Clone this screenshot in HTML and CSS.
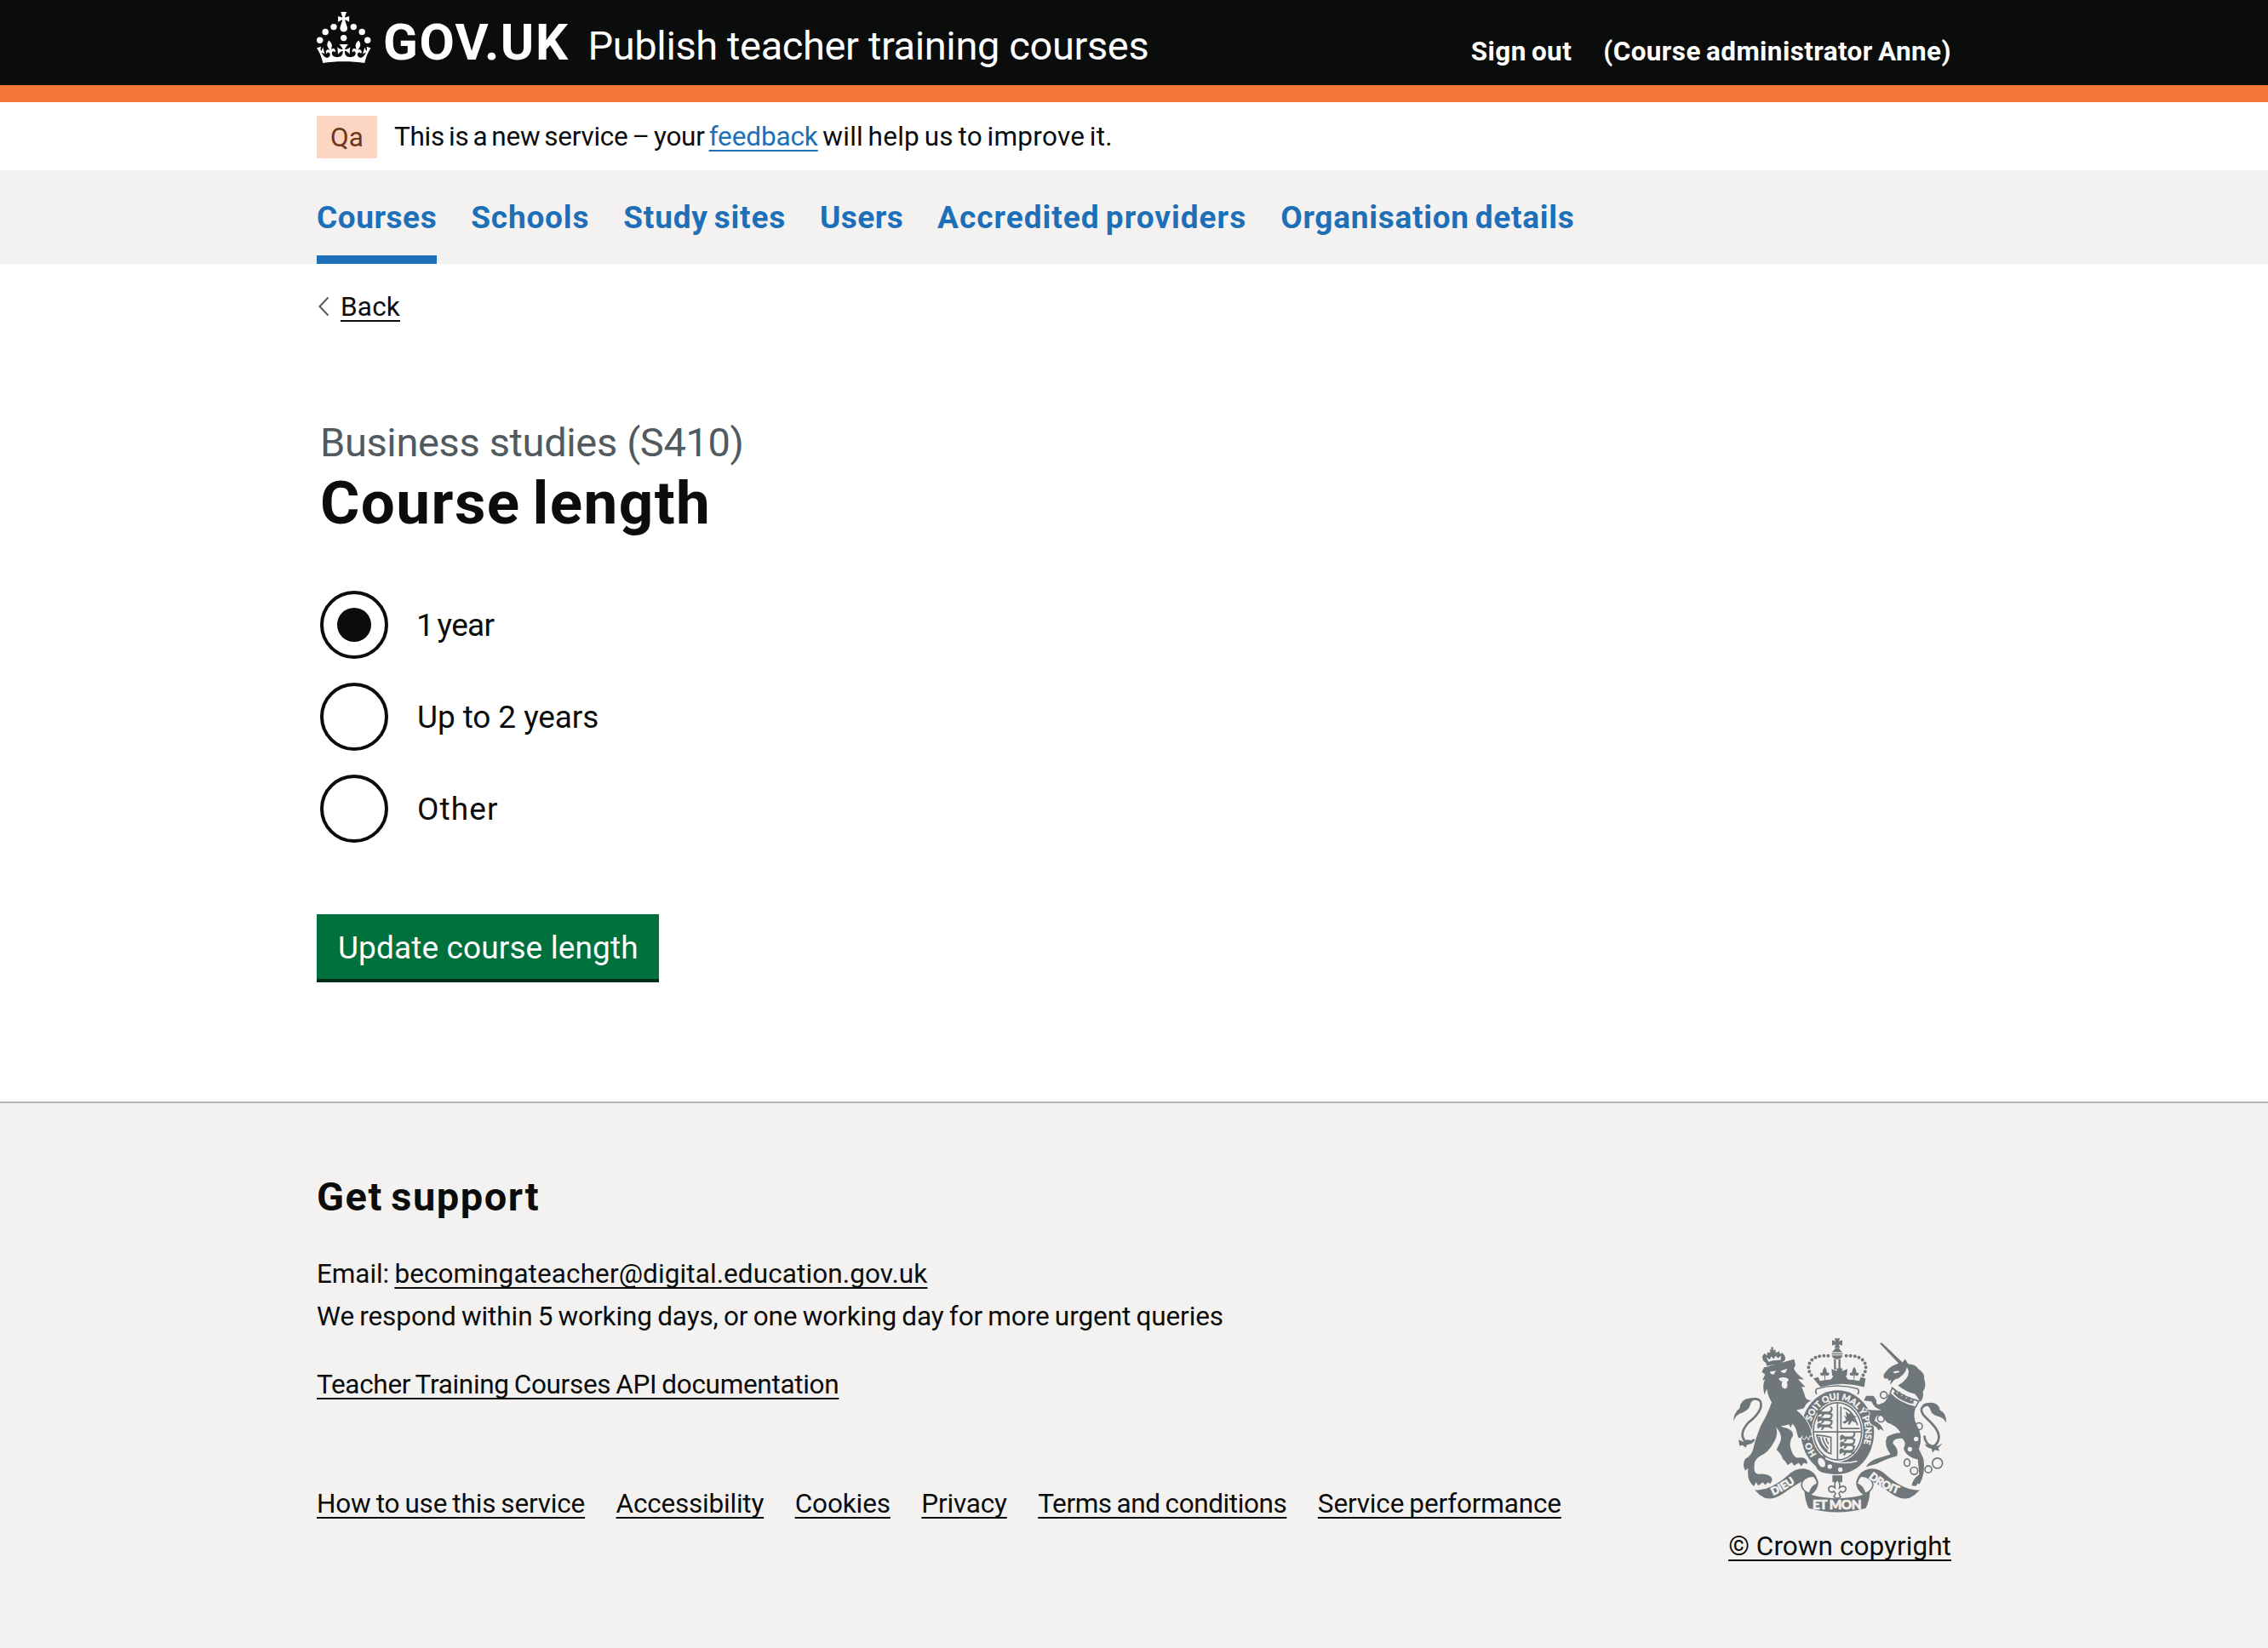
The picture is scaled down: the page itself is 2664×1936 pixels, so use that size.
FILE: index.html
```html
<!DOCTYPE html>
<html lang="en">
<head>
<meta charset="utf-8">
<title>Course length - Publish teacher training courses - GOV.UK</title>
<link rel="stylesheet" href="styles.css">
</head>
<body>
<header class="header">
  <div class="container header-inner">
    <svg class="crown" viewBox="0 0 64 60" aria-hidden="true">
      <circle cx="20" cy="17.6" r="3.7"/><circle cx="10.2" cy="23.5" r="3.7"/><circle cx="3.7" cy="33.2" r="3.7"/>
      <circle cx="31.7" cy="30.6" r="3.7"/><circle cx="43.3" cy="17.6" r="3.7"/><circle cx="53.2" cy="23.5" r="3.7"/><circle cx="59.7" cy="33.2" r="3.7"/>
      <path d="M33.1,9.8c.2-.1.3-.3.5-.5l4.6,2.4v-6.8l-4.6,1.5c-.1-.2-.3-.3-.5-.5l1.9-5.9h-6.7l1.9,5.9c-.2.1-.3.3-.5.5l-4.6-1.5v6.8l4.6-2.4c.1.2.3.3.5.5l-2.6,8c-.9,2.8,1.2,5.7,4.1,5.7h0c3,0,5.1-2.9,4.1-5.7l-2.6-8ZM37,37.9s-3.4,3.8-4.1,6.1c2.2,0,4.2-.5,6.4-2.8l-.7,8.5c-2-2.8-4.4-4.1-5.7-3.8.1,3.1.5,6.7,5.8,7.2,3.7.3,6.7-1.5,7-3.8.4-2.6-2-4.3-3.7-1.6-1.4-4.5,2.4-6.1,4.9-3.2-1.9-4.5-1.8-7.7,2.4-10.9,3,4,2.6,7.3-1.2,11.1,2.4-1.3,6.2,0,4,4.6-1.2-2.8-3.7-2.2-4.2.2-.3,1.7.7,3.7,3,4.2,1.9.3,4.7-.9,7-5.9-1.3,0-2.4.7-3.9,1.7l2.4-8c.6,2.3,1.4,3.7,2.2,4.5.6-1.6.5-2.8,0-5.3l5,1.8c-2.6,3.6-5.2,8.7-7.3,17.5-7.4-1.1-15.7-1.7-24.5-1.7h0c-8.8,0-17.1.6-24.5,1.7-2.1-8.9-4.7-13.9-7.3-17.5l5-1.8c-.5,2.5-.6,3.7,0,5.3.8-.8,1.6-2.3,2.2-4.5l2.4,8c-1.5-1-2.6-1.7-3.9-1.7,2.3,5,5.2,6.2,7,5.9,2.3-.4,3.3-2.4,3-4.2-.5-2.4-3-3.1-4.2-.2-2.2-4.6,1.6-6,4-4.6-3.7-3.7-4.2-7.1-1.2-11.1,4.2,3.2,4.3,6.4,2.4,10.9,2.5-2.8,6.3-1.3,4.9,3.2-1.8-2.7-4.1-1-3.7,1.6.3,2.3,3.3,4.1,7,3.8,5.4-.5,5.7-4.2,5.8-7.2-1.3-.2-3.7,1-5.7,3.8l-.7-8.5c2.2,2.3,4.2,2.7,6.4,2.8-.7-2.3-4.1-6.1-4.1-6.1h10.6,0Z"/>
    </svg>
    <span class="logotype">GOV.UK</span>
    <a class="service-name">Publish teacher training courses</a>
    <nav class="account">
      <a class="sign-out">Sign out</a>
      <a class="user">(Course administrator Anne)</a>
    </nav>
  </div>
</header>

<div class="container phase">
  <strong class="tag">Qa</strong>
  <span class="phase-text"><span class="phase-lead">This is a new service – your </span><a class="feedback">feedback</a><span class="phase-tail"> will help us to improve it.</span></span>
</div>

<nav class="primary">
  <div class="container primary-list">
    <a class="primary-item current">Courses</a>
    <a class="primary-item">Schools</a>
    <a class="primary-item">Study sites</a>
    <a class="primary-item">Users</a>
    <a class="primary-item">Accredited providers</a>
    <a class="primary-item">Organisation details</a>
  </div>
</nav>

<main class="container main">
  <a class="back">
    <svg class="chevron" viewBox="0 0 14 24" aria-hidden="true"><path d="M12.500 1.500 2.500 12l10 10.500"/></svg>
    <span class="back-text">Back</span>
  </a>
  <form class="form">
    <span class="caption">Business studies (S410)</span>
    <h1 class="title">Course length</h1>
    <div class="radios">
      <label class="radio"><span class="ring checked"></span><span class="label label-one">1 year</span></label>
      <label class="radio"><span class="ring"></span><span class="label label-two">Up to 2 years</span></label>
      <label class="radio"><span class="ring"></span><span class="label label-other">Other</span></label>
    </div>
    <button class="button" type="button">Update course length</button>
  </form>
</main>

<footer class="footer">
  <div class="container footer-inner">
    <div class="support">
      <h2 class="support-title">Get support</h2>
      <p class="line"><span class="email-label">Email: </span><a class="link email">becomingateacher@digital.education.gov.uk</a></p>
      <p class="line respond">We respond within 5 working days, or one working day for more urgent queries</p>
      <p class="line api"><a class="link">Teacher Training Courses API documentation</a></p>
      <div class="meta">
        <a class="link">How to use this service</a>
        <a class="link">Accessibility</a>
        <a class="link">Cookies</a>
        <a class="link">Privacy</a>
        <a class="link">Terms and conditions</a>
        <a class="link">Service performance</a>
      </div>
    </div>
    <div class="copyright">
      <svg class="arms" viewBox="78 65 750 614" aria-hidden="true">
        <defs>
          <path id="arc-motto" d="M352.500 358A98 115 0 0 1 445 281A98 115 0 0 1 543 396A98 115 0 0 1 506 486"/>
          <path id="arc-ho" d="M372 474A98 115 0 0 1 348 416"/>
          <path id="arc-dieu" d="M218 619Q273 595 324 552"/>
          <path id="arc-droit" d="M554 556Q602 598 680 621"/>
          <path id="beast" d="M-30-8q4-8 11-4l6 5h22q8-1 9-10l-4-6q9-4 10 5-1 14-9 17l9 4-3 5-12-5h-14l-6 9h-7l5-10-9 1-5 5q-5-4-3-8z"/>
        </defs>
        <!-- crown -->
        <path d="M434 65h20l-5 11 13-5v20l-13-5 5 13h-20l5-13-13 5V71l13 5zM439 100h10l13 14h-37zM425 118h38v4h-38zM425 125h38q-3 13-19 14-16-1-19-14z"/>
        <path class="bars" d="M436 139v36M452 139v36"/>
        <path class="beads" d="M412 127h-20q-49 5-49 44 2 20 20 35M476 127h20q49 5 49 44-2 20-20 35"/>
        <path d="M360 206l17-4 6 13 17-3-2-18q-10 8-14-3 0-8 8-4 0-12 8-22 8 10 8 22 8-4 8 4-4 11-14 3v18l20-2 8-11-4-3-2-23 20 8-4-10h24l-4 10 20-8-2 23-4 3 8 11 20 2v-18q-10 8-14-3 0-8 8-4 0-12 8-22 8 10 8 22 8-4 8 4-4 11-14 3l-2 18 17 3 6-13 17 4-5 31q-77-22-154 0z"/>
        <path class="line5" d="M372 262q-8-10 0-19 72-21 144 0 8 10 0 19"/>
        <!-- garter and shield -->
        <ellipse cx="445" cy="396" rx="129" ry="148"/>
        <ellipse class="paper" cx="445" cy="393" rx="91" ry="107"/>
        <ellipse class="line5" cx="445" cy="393" rx="85" ry="101"/>
        <path class="line6" d="M445 294v198M362 395h166M457 305v78h66M466 310q32 8 50 62"/>
        <use href="#beast" x="404" y="330"/><use href="#beast" x="404" y="353"/><use href="#beast" x="404" y="376"/>
        <use href="#beast" x="484" y="418"/><use href="#beast" x="484" y="442"/><use href="#beast" x="482" y="466"/>
        <path d="M473 322l13 10 8-8 5 12 14 5-12 4 10 18-16-7-5 12-9 2 5-14-16 10-8-5 14-8-8-17 10 7z"/>
        <path class="line5" d="M372 406q28 2 50 8v58q-32-6-50-64zM380 412q8 35 30 50M392 414q6 24 20 40M404 416q2 12 10 22"/>
        <path d="M376 484q10-10 24-4l10 14q50 22 108 4l-16 28q-40 26-100 14-26-4-32-22z"/>
        <path class="belt-edge" d="M402 488q52 26 112 10"/>
        <circle class="paper" cx="418" cy="517" r="8"/><circle class="paper" cx="455" cy="528" r="8"/>
        <ellipse class="hollow" cx="389" cy="503" rx="14" ry="20" transform="rotate(-28 389 503)"/>
        <text class="motto"><textPath href="#arc-ho">HO</textPath><textPath href="#arc-motto">SOIT QUI MAL Y PENSE</textPath></text>
        <!-- lion -->
        <g class="edged">
          <path d="M178 184L186 168 292 139 297 160 291 172Q300 192 327 210L306 209Q318 222 332 237L318 236Q328 256 330 268 334 286 354 283 335 292 326 312L300 318Q336 345 350 385L355 410Q346 402 343 420L334 408Q330 428 321 415L322 404Q312 425 306 412L302 398Q300 380 286 366L280 380 274 368Q262 372 246 374L252 378Q290 385 288 408 270 435 284 464 292 486 306 486 340 480 338 508L326 504 318 516 308 504 292 514 284 502 270 512 262 500 252 490Q246 470 230 458L238 440Q258 410 228 378 238 400 222 430 200 470 172 480 150 494 152 515 148 540 166 544 190 540 206 550 222 560 208 578L200 572 190 582 182 572 166 584 158 572 150 587 140 575Q126 560 130 522L120 532Q108 510 120 490 142 478 148 455 154 425 175 372 200 330 213 290 200 270 196 242L188 264Q178 230 190 210L180 214Q186 200 190 192Z"/>
        </g>
        <path d="M196 162l-4-12q-12-4-12-22l8-10 8 8 2-12 10 2-2-12 6 2-1-10 8 1-1 11 8-4 2 12 12-6 2 10 9-4 9 12q4 16-9 20l-2 10q-26-2-53 4z"/>
        <path class="paper" d="M202 148l-8-16 12 8 6-12 8 10 8-12 7 10 12-10-3 16q-22-2-42 6zM206 183l22-4-8 14q-10 0-14-10zM244 180l24-8-6 14q-10 4-18-6zM238 206q20-8 34 2 2 10-6 10 6 14-2 24-14 2-16-12l2-14q-8 2-12-10z"/>
        <path class="tail" d="M148 279q34-4 26 32-10 26-44 52-34 40-10 66 16 10 32-8"/>
        <path d="M78 358q2-32 22-46 2-32 36-36 18-4 30 2-26 4-28 20-4 20-26 28-26 6-34 32zM96 422l18 8 12-8 26 4q-10 14-26 14l-4 10-12-8-10 2z"/>
        <!-- unicorn -->
        <g class="edged">
          <path d="M625 262L720 312Q708 340 725 372 748 410 732 455L748 490Q756 540 734 580L728 576 722 586 706 584Q712 556 733 545L728 492Q690 485 678 455 690 430 672 418 640 416 640 436 662 455 655 480 620 488 582 508L545 518Q560 495 586 488L632 474Q606 440 620 412 640 398 668 398 650 370 620 362L600 338Q580 330 576 356 600 366 608 392L596 384 590 390 582 378Q552 365 557 345L560 326 548 316Q575 320 600 318 574 312 565 288L538 284 546 268 572 268 590 296Q615 300 625 262Z"/>
        </g>
        <path d="M594 83l7-3 73 70 9-12 11 17q28 2 36 18 24 16 20 34 10 26-4 46 4 20-8 36l-20-28q-28-4-60-30 38-20 38-50-2-8-6-14-8 32-44 44l-16 18 4-18-8 4-4-8-12 0q-4-6-2-14 16-24 30-30l22-10z"/>
        <path class="paper" d="M640 184l16-5 9 5-18 4z"/>
        <path class="hollow" d="M638 240q40 34 94 46l-12 22q-56-12-90-48z"/>
        <path d="M642 260l6-12 8 14 10-10 4 18 12-8 4 16 14-8 2 16 12-6-2 16q-44-8-70-36z"/>
        <g class="ring-chain"><circle cx="608" cy="265" r="12"/><circle cx="598" cy="348" r="12"/><circle cx="732" cy="375" r="12"/><ellipse cx="690" cy="503" rx="10" ry="13"/><circle cx="715" cy="532" r="13"/><circle cx="765" cy="527" r="12"/><circle cx="797" cy="505" r="18"/></g>
        <circle class="paper" cx="590" cy="290" r="8"/><circle class="paper" cx="722" cy="420" r="8"/><circle class="paper" cx="700" cy="456" r="8"/>
        <path class="tail" d="M764 298q-36 8-16 38l30 30q34 36 20 64-12 24-32 10-16-16-14-32"/>
        <path d="M828 362q2-32-22-44-4-26-34-26-18 0-28 8 24 0 28 16 4 18 26 24 20 4 30 22zM816 434l-16 10-20 0-28-6q8 14 24 16l4 14 8-10 16 4-4-10z"/>
        <!-- ribbon -->
        <path d="M153 599q28 4 56-10 30-14 60-40 28-28 62-24 36 6 46 44 2 30-26 48l-8-2q14-34-18-48-28 14-70 44-38 26-66 17-20-10-36-29zM735 599q-28 4-56-10-30-14-60-40-28-28-62-24-36 6-46 44-2 30 26 48l8-2q-14-34 18-48 28 14 70 44 38 26 66 17 20-10 36-29z"/>
        <path class="hollow" d="M360 550q-40 4-42 32 2 20 28 30 6-26 28-34-2-18-14-28zM528 550q40 4 42 32-2 20-28 30-6-26-28-34 2-18 14-28z"/>
        <path d="M328 598q8 26 116 32 108-6 116-32-2 40-15 66-50 14-101 14t-101-14q-13-26-15-66z"/>
        <text class="scroll"><textPath href="#arc-dieu">DIEU</textPath></text>
        <text class="scroll"><textPath href="#arc-droit">DROIT</textPath></text>
        <text class="scroll-mid" x="357" y="668" textLength="173">ET MON</text>
        <path d="M427 548h35v24h-35z"/>
        <path class="hollow" d="M444 562q12 12 8 30 14-12 22 0 2 14-12 16l-6-4-6 8 6 12-12 6-12-6 6-12-6-8-6 4q-14-2-12-16 8-12 22 0-4-18 8-30z"/>
      </svg>
      <a class="link">© Crown copyright</a>
    </div>
  </div>
</footer>
</body>
</html>
```
FILE: styles.css
```css
* { box-sizing: border-box; }

body {
  margin: 0;
  background: #fff;
  color: #0b0c0c;
  font-family: Roboto, "Liberation Sans", sans-serif;
  font-size: 31.5px;
}

.container { width: 1920px; margin: 0 auto; }

/* Header */
.header { height: 120px; background: #0b0c0c; border-bottom: 20px solid #f47738; color: #fff; }
.header-inner { display: flex; align-items: flex-start; }
.crown { flex: none; width: 64px; height: 60px; margin-top: 14px; fill: #fff; }
.logotype { margin-left: 14px; font-size: 60px; font-weight: 700; line-height: 99px; letter-spacing: 1.5px; }
.service-name { margin-left: 22px; font-size: 47px; line-height: 108px; letter-spacing: -0.38px; white-space: nowrap; }
.account { display: flex; gap: 37px; margin-left: auto; font-weight: 700; line-height: 122px; white-space: nowrap; word-spacing: -2px; }
.sign-out { letter-spacing: 0.4px; }
.user { letter-spacing: 0.4px; }

/* Phase banner */
.phase { display: flex; align-items: flex-start; height: 80px; white-space: nowrap; }
.tag { width: 71px; height: 50px; margin: 16px 20px 0 0; padding-left: 16px; background: #fcd6c3; color: #6e3619; font-weight: 400; line-height: 51px; }
.phase-text { line-height: 82px; white-space: pre; word-spacing: -2.5px; }
.phase-lead { letter-spacing: -0.27px; }
.phase-tail { letter-spacing: 0.27px; }
.feedback { color: #1d70b8; letter-spacing: -0.12px; text-decoration: underline; text-decoration-thickness: 2px; text-underline-offset: 5px; text-decoration-skip-ink: none; }

/* Primary navigation */
.primary { background: #f3f2f1; }
.primary-list { display: flex; gap: 40px; height: 110px; }
.primary-item { color: #1d70b8; font-size: 37px; font-weight: 700; line-height: 112px; white-space: nowrap; letter-spacing: 0.55px; word-spacing: -3px; }
.primary-item:nth-child(2) { letter-spacing: 0.81px; }
.primary-item:nth-child(3) { letter-spacing: 0.8px; }
.primary-item:nth-child(4) { letter-spacing: 0.42px; }
.primary-item:nth-child(5) { letter-spacing: 1px; }
.primary-item:nth-child(6) { letter-spacing: 0.72px; }
.current { box-shadow: inset 0 -10px #1d70b8; }

/* Content */
.main { padding: 31px 0 140px; }
.back { display: flex; line-height: 40px; }
.chevron { width: 14px; height: 24px; margin: 7px 13px 0 1px; fill: none; stroke: #505a5f; stroke-width: 2; }
.back-text { letter-spacing: 0.2px; text-decoration: underline; text-decoration-thickness: 2px; text-underline-offset: 5px; }
.form { display: block; padding-top: 109px; }
.caption { display: block; margin-left: 4px; color: #505a5f; font-size: 47px; line-height: 60px; letter-spacing: -0.36px; }
.title { margin: 0 0 63px 4px; font-size: 71px; line-height: 81px; letter-spacing: 1.4px; word-spacing: -5px; }
.radios { display: grid; gap: 28px; margin-left: 4px; }
.radio { display: flex; height: 80px; }
.ring { display: grid; place-items: center; width: 80px; height: 80px; border: 4px solid #0b0c0c; border-radius: 50%; }
.checked::before { content: ""; width: 40px; height: 40px; border-radius: 50%; background: #0b0c0c; }
.label { margin-left: 34px; font-size: 37px; line-height: 82px; }
.label-one { margin-left: 33px; letter-spacing: -0.7px; word-spacing: -4px; }
.label-two { letter-spacing: -0.1px; }
.label-other { letter-spacing: 1.1px; }
.button { display: block; width: 402px; height: 80px; margin: 84px 0 0; padding: 4px 0 0 25px; border: 0; border-bottom: 4px solid #002d18; background: #00703c; color: #fff; font: 37px/72px Roboto, "Liberation Sans", sans-serif; letter-spacing: 0.12px; text-align: left; }

/* Footer */
.footer { min-height: 642px; border-top: 2px solid #b1b4b6; background: #f3f2f1; }
.footer-inner { display: flex; justify-content: space-between; align-items: flex-end; padding-top: 80px; }
.support { padding-bottom: 50px; }
.support-title { margin: 0 0 36px; font-size: 47px; line-height: 60px; letter-spacing: 1.55px; word-spacing: -4px; }
.line { margin: 0; line-height: 50px; white-space: pre; word-spacing: -1.5px; }
.link { letter-spacing: 0.1px; text-decoration: underline; text-decoration-thickness: 2px; text-underline-offset: 5px; text-decoration-skip-ink: none; white-space: nowrap; }
.email-label { letter-spacing: -0.08px; }
.respond { letter-spacing: -0.09px; }
.api { margin-top: 30px; }
.api .link { letter-spacing: -0.31px; }
.meta { display: flex; gap: 36.5px; margin-top: 90px; line-height: 50px; word-spacing: -1.5px; }
.meta .link { letter-spacing: -0.18px; }
.meta .link:nth-child(2) { letter-spacing: -0.21px; }
.meta .link:nth-child(3) { letter-spacing: -0.12px; }
.meta .link:nth-child(4) { letter-spacing: -0.2px; }
.meta .link:nth-child(5) { letter-spacing: -0.41px; }
.meta .link:nth-child(6) { letter-spacing: -0.16px; }
.copyright { display: grid; justify-items: center; line-height: 50px; }
.copyright .link { letter-spacing: 0.06px; }

/* Coat of arms */
.arms { width: 250px; height: 205px; margin-bottom: 15px; fill: #6f777b; font-family: Lato, "Liberation Sans", sans-serif; font-weight: 900; overflow: visible; }
.arms .paper, .motto, .scroll, .scroll-mid { fill: #f3f2f1; }
.hollow { fill: #f3f2f1; stroke: #6f777b; stroke-width: 5; }
.line5, .line6, .bars, .tail, .ring-chain { fill: none; stroke: #6f777b; stroke-width: 5; }
.bars { stroke-width: 7; }
.belt-edge { fill: none; stroke: #f3f2f1; stroke-width: 5; }
.tail { stroke-width: 8; }
.beads { fill: none; stroke: #6f777b; stroke-width: 12; stroke-linecap: round; stroke-dasharray: 0 15; }
.edged { stroke: #f3f2f1; stroke-width: 5; paint-order: stroke; }
.motto { font-size: 31px; stroke: #f3f2f1; stroke-width: 1; }
.scroll { font-size: 38px; stroke: #f3f2f1; stroke-width: 2; }
.scroll-mid { font-size: 46px; stroke: #f3f2f1; stroke-width: 2; }
```
